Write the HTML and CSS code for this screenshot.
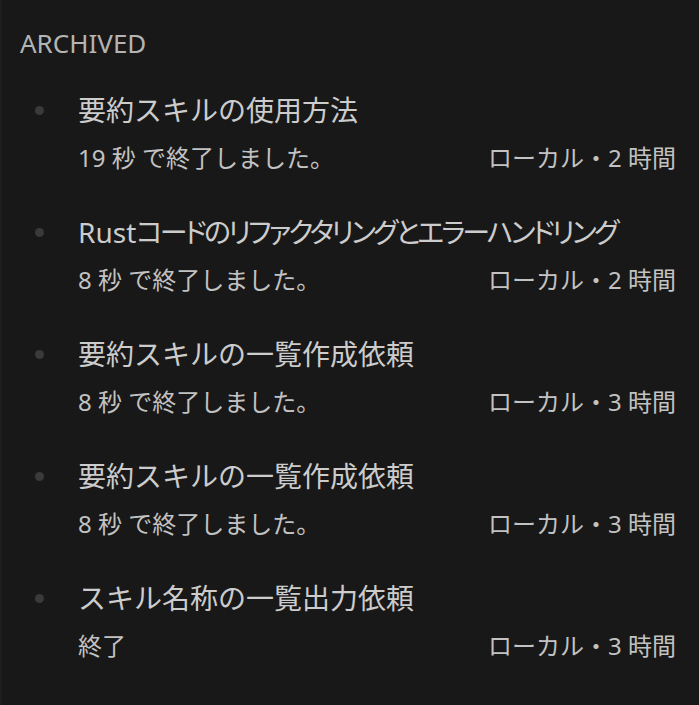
FILE: index.html
```html
<!DOCTYPE html>
<html lang="ja">
<head>
<meta charset="utf-8">
<link rel="stylesheet" href="styles.css">
</head>
<body>
<div class="panel">
  <div class="section-title">ARCHIVED</div>
  <ul class="list">
    <li class="item">
      <span class="dot"></span>
      <span class="title">要約スキルの使用方法</span>
      <span class="status">19 秒 で終了しました。</span>
      <span class="meta">ローカル・2 時間</span>
    </li>
    <li class="item">
      <span class="dot"></span>
      <span class="title">Rust<span class="kana-tight">コードのリファクタリングとエラーハンドリング</span></span>
      <span class="status">8 秒 で終了しました。</span>
      <span class="meta">ローカル・2 時間</span>
    </li>
    <li class="item">
      <span class="dot"></span>
      <span class="title">要約スキルの一覧作成依頼</span>
      <span class="status">8 秒 で終了しました。</span>
      <span class="meta">ローカル・3 時間</span>
    </li>
    <li class="item">
      <span class="dot"></span>
      <span class="title">要約スキルの一覧作成依頼</span>
      <span class="status">8 秒 で終了しました。</span>
      <span class="meta">ローカル・3 時間</span>
    </li>
    <li class="item">
      <span class="dot"></span>
      <span class="title">スキル名称の一覧出力依頼</span>
      <span class="status">終了</span>
      <span class="meta">ローカル・3 時間</span>
    </li>
  </ul>
</div>
</body>
</html>
```

FILE: styles.css
```css
html, body {
  margin: 0;
  padding: 0;
  background: #181818;
}
body {
  font-family: "Noto Sans", "Noto Sans CJK JP", sans-serif;
  color: #cccccc;
}
.panel {
  min-height: 705px;
  box-sizing: border-box;
  border-left: 2px solid #1e1e1e;
  padding: 27px 23px 0 18px;
}
.section-title {
  font-size: 26px;
  line-height: 32px;
  color: #b4b4b4;
}
.list {
  list-style: none;
  margin: 28px 0 0 0;
  padding: 0;
  display: flex;
  flex-direction: column;
  gap: 28px;
}
.item {
  display: grid;
  grid-template-columns: 58px 1fr auto;
  grid-template-rows: 47px 47px;
  align-items: center;
}
.dot {
  grid-column: 1;
  grid-row: 1;
  width: 9px;
  height: 9px;
  border-radius: 50%;
  background: #3a3a3a;
  margin-left: 15px;
}
.title {
  grid-column: 2 / 4;
  grid-row: 1;
  font-size: 28px;
  line-height: 47px;
  color: #cccccc;
  white-space: nowrap;
}
.kana-tight {
  font-feature-settings: "palt";
  letter-spacing: -2.9px;
}
.status {
  grid-column: 2;
  grid-row: 2;
  font-size: 24px;
  line-height: 47px;
  color: #c2c2c2;
}
.meta {
  grid-column: 3;
  grid-row: 2;
  font-size: 24px;
  line-height: 47px;
  color: #c2c2c2;
  text-align: right;
}
```
